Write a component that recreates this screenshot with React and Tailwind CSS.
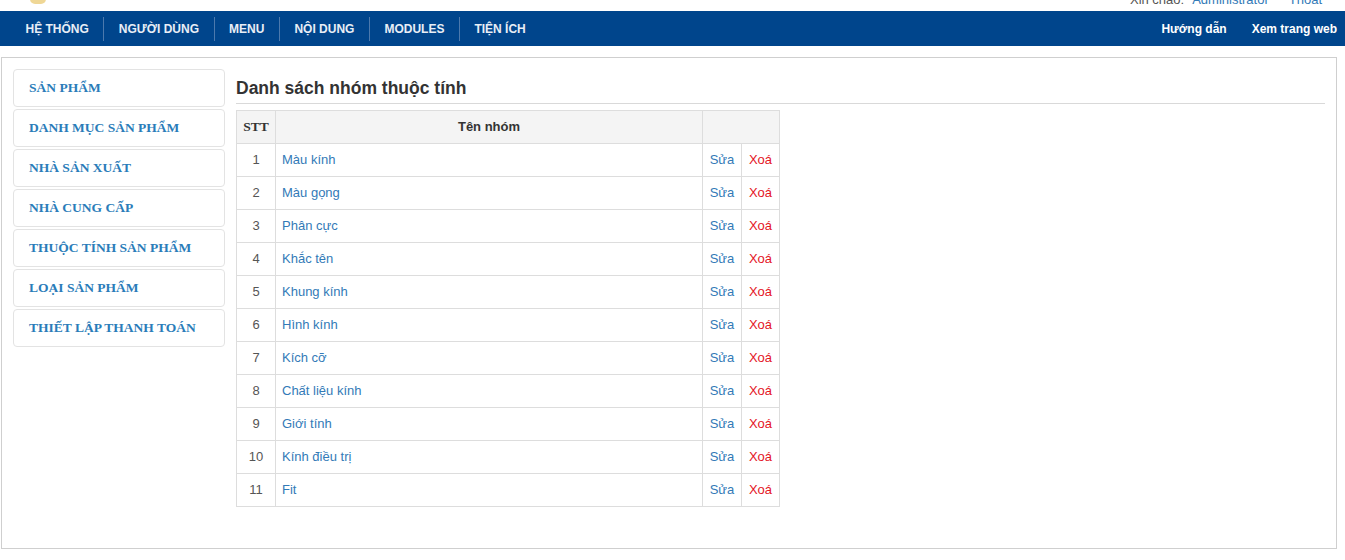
const menu = ['HỆ THỐNG', 'NGƯỜI DÙNG', 'MENU', 'NỘI DUNG', 'MODULES', 'TIỆN ÍCH'];

const sideItems = [
  'SẢN PHẨM',
  'DANH MỤC SẢN PHẨM',
  'NHÀ SẢN XUẤT',
  'NHÀ CUNG CẤP',
  'THUỘC TÍNH SẢN PHẨM',
  'LOẠI SẢN PHẨM',
  'THIẾT LẬP THANH TOÁN',
];

const groups = [
  'Màu kính',
  'Màu gọng',
  'Phân cực',
  'Khắc tên',
  'Khung kính',
  'Hình kính',
  'Kích cỡ',
  'Chất liệu kính',
  'Giới tính',
  'Kính điều trị',
  'Fit',
];

export default function App() {
  return (
    <div className="min-h-[560px] bg-white font-['Liberation_Sans',Arial,sans-serif] text-[13px] text-[#333]">
      {/* top strip */}
      <div className="relative h-[11px] overflow-hidden">
        <div className="absolute left-[30px] top-[-6px] h-[10px] w-[16px] rounded-full bg-[#e8c66a] opacity-70"></div>
        <div className="absolute right-[23px] top-[-8px] flex text-[13px] leading-[15px]">
          <span className="text-[#555]">Xin chào:</span>
          <span className="ml-[8px] text-[#337ab7]">Administrator</span>
          <span className="ml-[20px] text-[#337ab7]">Thoát</span>
        </div>
      </div>

      {/* nav */}
      <div className="flex h-[35px] items-center justify-between bg-[#00458c] pl-[11px] pr-[8px]">
        <div className="flex h-full items-center">
          {menu.map((m, i) => (
            <div key={m} className="flex h-full items-center">
              {i > 0 && <div className="h-[24px] w-px bg-[#4c79ad]"></div>}
              <span className="px-[14.5px] text-[12px] font-bold text-[#e8eef6]">{m}</span>
            </div>
          ))}
        </div>
        <div className="flex items-center gap-[25px] text-[12px] font-bold text-white">
          <span>Hướng dẫn</span>
          <span>Xem trang web</span>
        </div>
      </div>

      {/* main */}
      <div className="pl-[1px] pr-[8px] pt-[11px]">
        <div className="flex h-[492px] border border-[#cfcfcf] pl-[11px] pr-[11px] pt-[11px]">
          <div className="flex w-[212px] shrink-0 flex-col gap-[2px]">
            {sideItems.map((s) => (
              <div
                key={s}
                className="flex h-[38px] items-center rounded-[4px] border border-[#e3e3e3] pl-[15px] font-['Liberation_Serif','Times_New_Roman',serif] text-[13.5px] font-bold text-[#2a7cb9]"
              >
                {s}
              </div>
            ))}
          </div>

          <div className="ml-[11px] flex-1">
            <h2 className="border-b border-[#d9d9d9] pb-[3px] pt-[7px] text-[17.5px] font-bold leading-[24px] text-[#333]">
              Danh sách nhóm thuộc tính
            </h2>
            <table className="mt-[6px] w-[544px] border-collapse text-[13px]">
              <thead>
                <tr className="h-[33px] bg-[#f4f4f4]">
                  <th className="w-[39px] border border-[#ddd] font-['Liberation_Serif','Times_New_Roman',serif] text-[13.5px] font-bold text-[#333]">
                    STT
                  </th>
                  <th className="border border-[#ddd] text-[13px] font-bold text-[#333]">Tên nhóm</th>
                  <th colSpan={2} className="w-[77px] border border-[#ddd]"></th>
                </tr>
              </thead>
              <tbody>
                {groups.map((g, i) => (
                  <tr key={g} className="h-[33px]">
                    <td className="border border-[#ddd] text-center text-[#555]">{i + 1}</td>
                    <td className="border border-[#ddd] px-[6px] text-[#337ab7]">{g}</td>
                    <td className="w-[39px] border border-[#ddd] text-center text-[#337ab7]">Sửa</td>
                    <td className="w-[38px] border border-[#ddd] text-center text-[#e4151f]">Xoá</td>
                  </tr>
                ))}
              </tbody>
            </table>
          </div>
        </div>
      </div>
    </div>
  );
}
